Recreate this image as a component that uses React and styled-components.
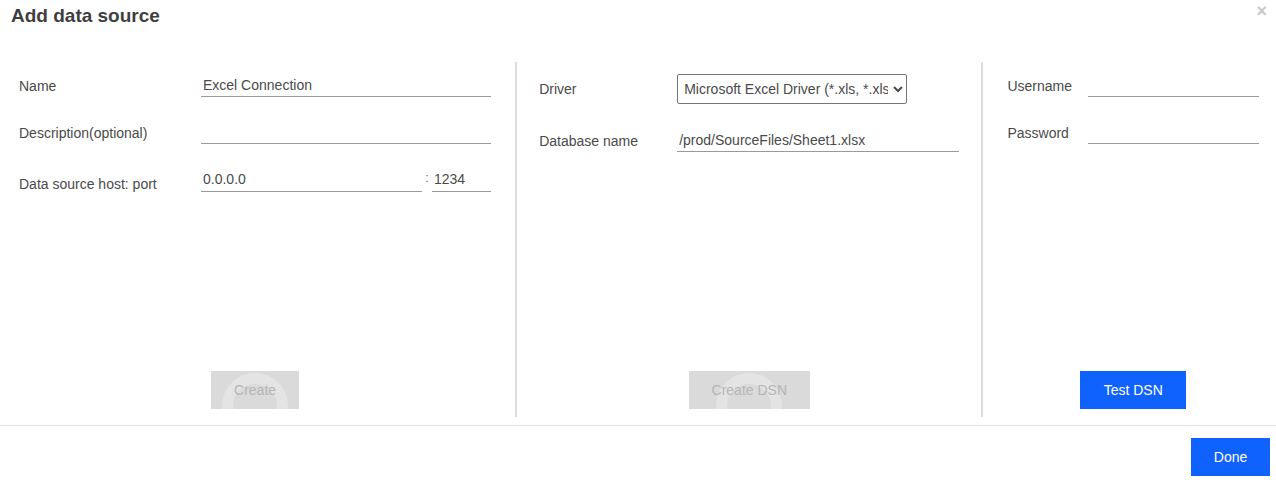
import React from "react";
import styled, { createGlobalStyle, css } from "styled-components";

const GlobalStyle = createGlobalStyle`
  body {
    margin: 0;
    background: #ffffff;
    font-family: "Liberation Sans", Arial, sans-serif;
    color: #4a4a4a;
  }
`;

const Dialog = styled.div`
  width: 1276px;
  height: 484px;
  display: flex;
  flex-direction: column;
  background: #ffffff;
`;

const Header = styled.div`
  display: flex;
  justify-content: space-between;
  align-items: flex-start;
  height: 62px;
  padding: 5px 11px 0 11px;
  box-sizing: border-box;
`;

const Title = styled.h1`
  margin: 0;
  font-size: 19px;
  font-weight: 700;
  color: #3f3f3f;
  line-height: 22px;
`;

const Close = styled.span`
  font-size: 18px;
  font-weight: 700;
  color: #c8c8c8;
  line-height: 14px;
  margin-top: -1px;
  margin-right: -2px;
`;

const Body = styled.div`
  display: flex;
  height: 355px;
`;

const Column = styled.div`
  width: ${(p) => p.$width}px;
  display: flex;
  flex-direction: column;
  padding: ${(p) => p.$top}px ${(p) => p.$right}px 8px ${(p) => p.$left}px;
  box-sizing: border-box;
`;

const Divider = styled.div`
  width: 2px;
  background: #dcdcdc;
`;

const Row = styled.div`
  display: grid;
  grid-template-columns: ${(p) => p.$label}px 1fr;
  align-items: center;
  margin-bottom: ${(p) => p.$gap}px;
`;

const Label = styled.label`
  font-size: 14px;
  color: #4a4a4a;
  padding-top: ${(p) => p.$shift || 0}px;
`;

const TextInput = styled.input`
  font-family: "Liberation Sans", Arial, sans-serif;
  font-size: 14px;
  color: #4a4a4a;
  border: none;
  border-bottom: 1px solid #9a9a9a;
  height: 24px;
  padding: 0 2px;
  outline: none;
  width: 100%;
  box-sizing: border-box;
  background: transparent;
`;

const HostWrap = styled.div`
  display: grid;
  grid-template-columns: 221px 10px 1fr;
  align-items: center;
`;

const Colon = styled.span`
  font-size: 13px;
  color: #777777;
  text-align: center;
  padding-bottom: 4px;
`;

const Select = styled.select`
  font-family: "Liberation Sans", Arial, sans-serif;
  font-size: 14px;
  color: #4a4a4a;
  height: 30px;
  width: 230px;
  border: 1px solid #767676;
  border-radius: 2px;
  background: #ffffff;
  padding: 0 2px;
`;

const Spacer = styled.div`
  flex: 1;
`;

const ButtonRow = styled.div`
  display: flex;
  justify-content: center;
  padding-left: ${(p) => p.$offset || 0}px;
`;

const Button = styled.button`
  position: relative;
  overflow: hidden;
  height: 38px;
  width: ${(p) => p.$width}px;
  border: none;
  font-family: "Liberation Sans", Arial, sans-serif;
  font-size: 14px;
  ${(p) =>
    p.disabled
      ? css`
          background: #dadada;
          color: #b5b5b5;
          &::before {
            content: "";
            position: absolute;
            left: 50%;
            top: 2px;
            width: 66px;
            height: 66px;
            margin-left: -33px;
            border-radius: 50%;
            border: 11px solid #e4e4e4;
            box-sizing: border-box;
          }
        `
      : css`
          background: #0f62fe;
          color: #ffffff;
        `}
`;

const ButtonText = styled.span`
  position: relative;
`;

const Footer = styled.div`
  margin-top: 8px;
  border-top: 1px solid #e0e0e0;
  display: flex;
  justify-content: flex-end;
  padding: 12px 6px 0 0;
`;

const App = () => {
  return (
    <>
      <GlobalStyle />
      <Dialog>
        <Header>
          <Title>Add data source</Title>
          <Close>×</Close>
        </Header>
        <Body>
          <Column $width={516} $top={11} $left={19} $right={24}>
            <Row $label={182} $gap={23}>
              <Label $shift={2}>Name</Label>
              <TextInput defaultValue="Excel Connection" />
            </Row>
            <Row $label={182} $gap={23}>
              <Label $shift={2}>Description(optional)</Label>
              <TextInput />
            </Row>
            <Row $label={182} $gap={0}>
              <Label $shift={9}>Data source host: port</Label>
              <HostWrap>
                <TextInput defaultValue="0.0.0.0" />
                <Colon>:</Colon>
                <TextInput defaultValue="1234" />
              </HostWrap>
            </Row>
            <Spacer />
            <ButtonRow $offset={-6}>
              <Button disabled $width={88}>
                <ButtonText>Create</ButtonText>
              </Button>
            </ButtonRow>
          </Column>
          <Divider />
          <Column $width={465} $top={12} $left={22} $right={22}>
            <Row $label={138} $gap={24}>
              <Label>Driver</Label>
              <Select defaultValue="excel">
                <option value="excel">Microsoft Excel Driver (*.xls, *.xlsx)</option>
              </Select>
            </Row>
            <Row $label={138} $gap={0}>
              <Label $shift={2}>Database name</Label>
              <TextInput defaultValue="/prod/SourceFiles/Sheet1.xlsx" />
            </Row>
            <Spacer />
            <ButtonRow $offset={-1}>
              <Button disabled $width={121}>
                <ButtonText>Create DSN</ButtonText>
              </Button>
            </ButtonRow>
          </Column>
          <Divider />
          <Column $width={293} $top={11} $left={24} $right={17}>
            <Row $label={81} $gap={23}>
              <Label $shift={2}>Username</Label>
              <TextInput />
            </Row>
            <Row $label={81} $gap={0}>
              <Label $shift={2}>Password</Label>
              <TextInput type="password" />
            </Row>
            <Spacer />
            <ButtonRow $offset={0}>
              <Button $width={106}>Test DSN</Button>
            </ButtonRow>
          </Column>
        </Body>
        <Footer>
          <Button $width={79}>Done</Button>
        </Footer>
      </Dialog>
    </>
  );
};

export default App;
